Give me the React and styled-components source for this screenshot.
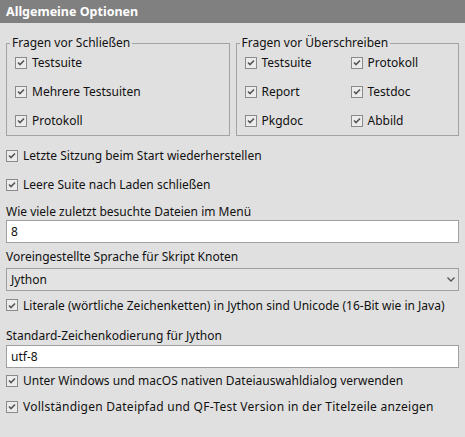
import React from 'react';
import styled, { createGlobalStyle } from 'styled-components';

const GlobalStyle = createGlobalStyle`
    html, body {
        margin: 0;
        padding: 0;
        background: #e0e0e0;
    }
    body {
        font-family: "Noto Sans", "Open Sans", sans-serif;
        font-size: 12px;
        color: #111;
    }
`;

const Page = styled.div`
    width: 465px;
    height: 437px;
    background: #e0e0e0;
    overflow: hidden;
`;

const Header = styled.div`
    height: 23px;
    background: #808080;
    color: #fff;
    font-weight: bold;
    font-size: 12.5px;
    line-height: 23px;
    padding-left: 6px;
`;

const Body = styled.div`
    padding: 0 6px;
    display: flex;
    flex-direction: column;
`;

const Groups = styled.div`
    display: grid;
    grid-template-columns: 1fr 1fr;
    gap: 6px;
    margin-top: 13px;
`;

const Group = styled.fieldset`
    margin: 0;
    padding: 0 8px 0 8px;
    border: 1px solid #a3a3a3;
    min-width: 0;

    legend {
        margin-left: -5px;
        padding: 0 2px;
        font-size: 12px;
        line-height: 14px;
    }
`;

const GroupGrid = styled.div`
    display: grid;
    grid-template-columns: ${({ $cols }) => ($cols === 2 ? '106px 1fr' : '1fr')};
    grid-auto-rows: 29px;
    margin-top: -2px;
`;

const CheckRow = styled.label`
    display: flex;
    align-items: center;
    gap: 5px;
    height: ${({ $h }) => $h || 29}px;
    margin-top: ${({ $mt }) => $mt || 0}px;
    white-space: nowrap;
    letter-spacing: ${({ $ls }) => $ls || 0}px;
`;

const Box = styled.span`
    box-sizing: border-box;
    width: 12px;
    height: 12px;
    flex: none;
    border: 1px solid #8a8a8a;
    background: #ececec;
    display: flex;
    align-items: center;
    justify-content: center;
`;

const FieldLabel = styled.div`
    line-height: 16px;
    height: 16px;
    margin-top: ${({ $mt }) => $mt || 0}px;
    white-space: nowrap;
`;

const TextInput = styled.div`
    box-sizing: border-box;
    height: 23px;
    margin-top: ${({ $mt }) => $mt || 0}px;
    border: 1px solid #a0a0a0;
    background: #fff;
    padding-left: 4px;
    line-height: 21px;
`;

const Select = styled(TextInput)`
    background: #e3e3e3;
    display: flex;
    align-items: center;
    justify-content: space-between;
    padding-right: 3px;
`;

function Check({ children, h, mt, ls }) {
    return (
        <CheckRow $h={h} $mt={mt} $ls={ls}>
            <Box>
                <svg width="8" height="7" viewBox="0 0 8 7">
                    <path d="M1 3.5 L3 5.5 L7 1.5" fill="none" stroke="#555" strokeWidth="1.6" />
                </svg>
            </Box>
            {children}
        </CheckRow>
    );
}

export default function App() {
    return (
        <Page>
            <GlobalStyle />
            <Header>Allgemeine Optionen</Header>
            <Body>
                <Groups>
                    <Group>
                        <legend>Fragen vor Schließen</legend>
                        <GroupGrid>
                            <Check>Testsuite</Check>
                            <Check>Mehrere Testsuiten</Check>
                            <Check>Protokoll</Check>
                        </GroupGrid>
                    </Group>
                    <Group>
                        <legend>Fragen vor Überschreiben</legend>
                        <GroupGrid $cols={2}>
                            <Check>Testsuite</Check>
                            <Check>Protokoll</Check>
                            <Check>Report</Check>
                            <Check>Testdoc</Check>
                            <Check>Pkgdoc</Check>
                            <Check>Abbild</Check>
                        </GroupGrid>
                    </Group>
                </Groups>
                <Check mt={5}>Letzte Sitzung beim Start wiederherstellen</Check>
                <Check>Leere Suite nach Laden schließen</Check>
                <FieldLabel $mt={5}>Wie viele zuletzt besuchte Dateien im Menü</FieldLabel>
                <TextInput>8</TextInput>
                <FieldLabel $mt={6}>Voreingestellte Sprache für Skript Knoten</FieldLabel>
                <Select $mt={3}>
                    <span>Jython</span>
                    <svg width="8" height="5" viewBox="0 0 8 5">
                        <path d="M0.5 0.5 L4 4 L7.5 0.5" fill="none" stroke="#555" strokeWidth="1.4" />
                    </svg>
                </Select>
                <Check h={28}>Literale (wörtliche Zeichenketten) in Jython sind Unicode (16-Bit wie in Java)</Check>
                <FieldLabel $mt={9}>Standard-Zeichenkodierung für Jython</FieldLabel>
                <TextInput $mt={1}>utf-8</TextInput>
                <Check h={25}>Unter Windows und macOS nativen Dateiauswahldialog verwenden</Check>
                <Check h={27} ls={0.25}>Vollständigen Dateipfad und QF-Test Version in der Titelzeile anzeigen</Check>
            </Body>
        </Page>
    );
}
